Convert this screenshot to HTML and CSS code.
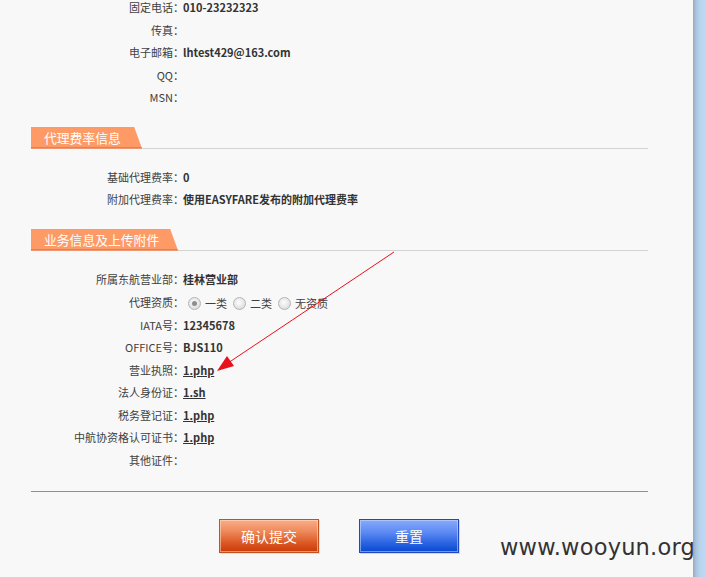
FILE: index.html
```html
<!DOCTYPE html>
<html lang="zh-CN">
<head>
<meta charset="utf-8">
<title>代理信息</title>
<link rel="stylesheet" href="styles.css">
</head>
<body>
<div class="page">
  <div class="main">
    <div class="rows first">
      <div class="row"><span class="lab">固定电话</span><span class="colon">：</span><span class="val">010-23232323</span></div>
      <div class="row"><span class="lab">传真</span><span class="colon">：</span><span class="val"></span></div>
      <div class="row"><span class="lab">电子邮箱</span><span class="colon">：</span><span class="val">lhtest429@163.com</span></div>
      <div class="row"><span class="lab">QQ</span><span class="colon">：</span><span class="val"></span></div>
      <div class="row"><span class="lab">MSN</span><span class="colon">：</span><span class="val"></span></div>
    </div>

    <div class="sec-head"><span class="tab tab-rate">代理费率信息</span></div>
    <div class="rows mid">
      <div class="row"><span class="lab">基础代理费率</span><span class="colon">：</span><span class="val">0</span></div>
      <div class="row"><span class="lab">附加代理费率</span><span class="colon">：</span><span class="val">使用EASYFARE发布的附加代理费率</span></div>
    </div>

    <div class="sec-head"><span class="tab tab-biz">业务信息及上传附件</span></div>
    <div class="rows last">
      <div class="row"><span class="lab">所属东航营业部</span><span class="colon">：</span><span class="val">桂林营业部</span></div>
      <div class="row radio-row"><span class="lab">代理资质</span><span class="colon">：</span>
        <span class="radios">
          <span class="radio checked"></span><span class="rtext">一类</span>
          <span class="radio"></span><span class="rtext">二类</span>
          <span class="radio"></span><span class="rtext">无资质</span>
        </span>
      </div>
      <div class="row"><span class="lab">IATA号</span><span class="colon">：</span><span class="val">12345678</span></div>
      <div class="row"><span class="lab">OFFICE号</span><span class="colon">：</span><span class="val">BJS110</span></div>
      <div class="row"><span class="lab">营业执照</span><span class="colon">：</span><a class="val link" href="#">1.php</a></div>
      <div class="row"><span class="lab">法人身份证</span><span class="colon">：</span><a class="val link" href="#">1.sh</a></div>
      <div class="row"><span class="lab">税务登记证</span><span class="colon">：</span><a class="val link" href="#">1.php</a></div>
      <div class="row"><span class="lab">中航协资格认可证书</span><span class="colon">：</span><a class="val link" href="#">1.php</a></div>
      <div class="row"><span class="lab">其他证件</span><span class="colon">：</span><span class="val"></span></div>
    </div>

    <div class="foot-line"></div>
    <div class="buttons">
      <button class="btn btn-ok" type="button">确认提交</button>
      <button class="btn btn-reset" type="button">重置</button>
    </div>
  </div>
  <div class="frame"></div>

  <svg class="arrow" width="705" height="577" viewBox="0 0 705 577">
    <line x1="394" y1="252" x2="228" y2="363" stroke="#e8101c" stroke-width="1"/>
    <polygon points="217,371 234,366 227,356" fill="#e8101c"/>
  </svg>
  <div class="watermark">www.wooyun.org</div>
</div>
</body>
</html>
```

FILE: styles.css
```css
html, body {
  margin: 0;
  padding: 0;
  background: #f8f8f8;
}

body {
  font-family: "Noto Sans CJK SC", "Noto Sans", sans-serif;
  font-size: 11px;
  color: #333;
  overflow: hidden;
}

.page {
  position: relative;
  display: flex;
  width: 705px;
  height: 577px;
  overflow: hidden;
}

.main {
  width: 693px;
  padding: 0 45px 0 31px;
  box-sizing: border-box;
  background: #f8f8f8;
}

.frame {
  width: 12px;
  background: linear-gradient(to right, #95abc2 0, #a9c3dc 3px, #b9d4ee 7px, #bdd8f2 12px);
}

.rows.first { margin-top: -4px; }
.rows.mid { margin-top: 17px; }
.rows.last { margin-top: 17px; }

.row {
  display: flex;
  align-items: center;
  height: 22.5px;
  line-height: 22.5px;
  white-space: nowrap;
}

.lab {
  width: 142px;
  flex: none;
  text-align: right;
  color: #404040;
}

.colon {
  width: 10px;
  flex: none;
  letter-spacing: -1px;
  color: #404040;
}

.val {
  font-weight: bold;
  color: #333;
}

.link {
  color: #333;
  text-decoration: underline;
}

.radio-row {
  height: 23.5px;
}

.radios {
  display: flex;
  align-items: center;
  padding-top: 3px;
}

.radio {
  display: inline-block;
  width: 11px;
  height: 11px;
  border-radius: 50%;
  border: 1px solid #b4b4b4;
  background: radial-gradient(circle at 45% 40%, #fdfdfd 0, #e6e6e6 55%, #d2d2d2 100%);
  margin-left: 6px;
  margin-right: 4px;
  position: relative;
}

.radio:first-child { margin-left: 5px; }

.radio.checked::after {
  content: "";
  position: absolute;
  left: 3px;
  top: 3px;
  width: 5px;
  height: 5px;
  border-radius: 50%;
  background: #8e8e8e;
}

.rtext {
  color: #404040;
}

.sec-head {
  margin-top: 18px;
  height: 21px;
  border-bottom: 1px solid #d3d3d3;
  display: flex;
  align-items: flex-start;
}

.tab {
  display: inline-block;
  height: 20px;
  line-height: 21px;
  border-bottom: 2px solid #f27a48;
  background: #fe9a66;
  color: #fff;
  font-size: 12.8px;
  padding-left: 13px;
  box-sizing: content-box;
  clip-path: polygon(0 0, calc(100% - 8px) 0, 100% 100%, 0 100%);
}

.tab-rate { width: 98px; }
.tab-biz { width: 134px; }

.foot-line {
  margin-top: 20px;
  border-top: 1px solid #e9714a;
}

.buttons {
  display: flex;
  gap: 40px;
  padding-left: 188px;
  margin-top: 27px;
}

.btn {
  width: 100px;
  height: 34px;
  border-radius: 0;
  font-family: "Noto Sans CJK SC", sans-serif;
  font-size: 14px;
  color: #fff;
  padding: 0;
  cursor: pointer;
}

.btn-ok {
  border: 1px solid #c5521e;
  background: linear-gradient(to bottom, #fcac86 0, #ee8a5c 35%, #dc5a26 70%, #cb3a06 100%);
  box-shadow: inset 0 0 0 1px rgba(255, 225, 200, 0.55), 1px 1px 0 #f6d8c8;
}

.btn-reset {
  border: 1px solid #2347be;
  background: linear-gradient(to bottom, #88aafb 0, #5a88f2 40%, #2a64e2 72%, #0748cf 100%);
  box-shadow: inset 0 0 0 1px rgba(200, 220, 255, 0.55), 1px 1px 0 #c8d6f6;
}

.arrow {
  position: absolute;
  left: 0;
  top: 0;
  pointer-events: none;
}

.watermark {
  position: absolute;
  left: 500px;
  top: 534px;
  font-family: "DejaVu Sans", sans-serif;
  font-size: 22.5px;
  color: #333;
  letter-spacing: 0.2px;
  pointer-events: none;
}
```
